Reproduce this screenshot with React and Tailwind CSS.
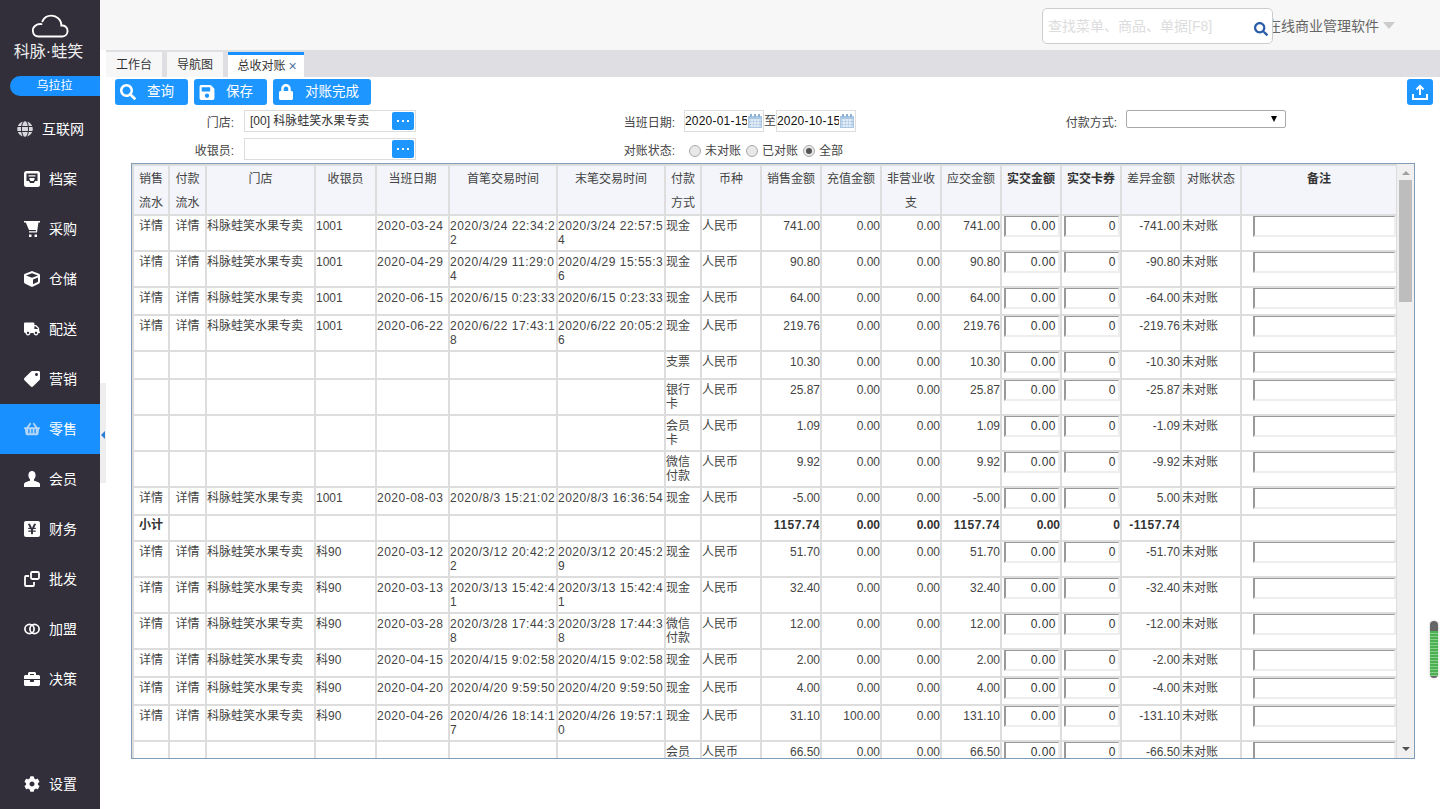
import {
  FaBriefcase,
  FaCog,
  FaCube,
  FaGlobe,
  FaLock,
  FaSave,
  FaSearch,
  FaShoppingBasket,
  FaTag,
  FaTruck,
  FaYenSign,
} from "react-icons/fa";

const ArchiveIcon = () => (
  <svg width="16" height="16" viewBox="0 0 16 16">
    <rect x="0" y="0" width="16" height="16" rx="2.500" fill="#fff" />
    <path d="M2.500 2.500h11v7.500h-2.500l-1 2h-4l-1-2h-2.500z" fill="#322f3b" />
    <path d="M4.500 4.300h7v1.200h-7zM5.500 7h5v1.500l-1 1.500h-3l-1-1.500z" fill="#fff" />
  </svg>
);

const CartIcon = () => (
  <svg width="16" height="16" viewBox="0 0 16 16" fill="#fff">
    <path d="M0 0h16v1.500h-1.600L13 11.500H5v-1.300h6.800l.2-1.200H5L1.800 1.500H0z" />
    <rect x="5" y="13.500" width="2.500" height="2.500" />
    <rect x="10.500" y="13.500" width="2.500" height="2.500" />
  </svg>
);

const UserIcon = () => (
  <svg width="16" height="16" viewBox="0 0 16 16" fill="#fff">
    <path d="M8 0c2.300 0 3.600 1.800 3.600 4.200 0 1.700-.7 3.200-1.600 4.100v1.500c2.300.8 6 1.600 6 3.200V16H0v-3c0-1.600 3.700-2.400 6-3.200V8.300C5.100 7.400 4.400 5.900 4.400 4.200 4.400 1.800 5.700 0 8 0z" />
  </svg>
);

const YenIcon = () => (
  <span className="w-4 h-4 rounded-[2px] bg-white flex items-center justify-center">
    <FaYenSign size={12} className="text-[#322f3b]" />
  </span>
);

const CloneIcon = () => (
  <svg width="16" height="16" viewBox="0 0 16 16" fill="none" stroke="#fff" strokeWidth="1.8">
    <rect x="7" y="1" width="8" height="7" rx="1.200" />
    <path d="M5 5H2a1 1 0 0 0-1 1v8a1 1 0 0 0 1 1h7a1 1 0 0 0 1-1v-3" />
  </svg>
);

const RingsIcon = () => (
  <svg width="16" height="16" viewBox="0 0 16 16" fill="none" stroke="#fff" strokeWidth="1.700">
    <circle cx="5.500" cy="8" r="4.600" />
    <circle cx="10.500" cy="8" r="4.600" />
  </svg>
);

const menu = [
  { label: "互联网", icon: <FaGlobe size={16} className="text-[#d8d8dc]" />, wide: true },
  { label: "档案", icon: <ArchiveIcon /> },
  { label: "采购", icon: <CartIcon /> },
  { label: "仓储", icon: <FaCube size={16} className="text-white" /> },
  { label: "配送", icon: <FaTruck size={16} className="text-white" /> },
  { label: "营销", icon: <FaTag size={16} className="text-white -scale-x-100" /> },
  { label: "零售", icon: <FaShoppingBasket size={16} className="text-[#b5d7f7]" />, active: true },
  { label: "会员", icon: <UserIcon /> },
  { label: "财务", icon: <YenIcon /> },
  { label: "批发", icon: <CloneIcon /> },
  { label: "加盟", icon: <RingsIcon /> },
  { label: "决策", icon: <FaBriefcase size={16} className="text-white" /> },
];

const MenuItem = ({ item }) => (
  <div
    className={`h-[50px] flex items-center text-[14px] text-white ${
      item.wide ? "pl-[17px] gap-[9px]" : "pl-6 gap-[9px]"
    } ${item.active ? "bg-[#1890ff]" : ""}`}
  >
    <span className="w-4 flex justify-center">{item.icon}</span>
    <span>{item.label}</span>
  </div>
);

const Sidebar = () => (
  <aside className="w-[100px] shrink-0 h-[809px] bg-[#322f3b] flex flex-col">
    <div className="h-[76px] flex flex-col items-center pt-[14px]">
      <svg width="38" height="25" viewBox="0 0 40 26" fill="none" stroke="#fff" strokeWidth="2" strokeLinecap="round">
        <path d="M11 10.500C6 10 1.500 13 2 18c.4 3.600 3 5.500 6 5.500h25c3.500 0 5.500-3 5.500-6 0-3.500-3-6-6.500-5.500C32 6 27 1.500 21.500 1.500 17 1.500 13.500 4 12 7.500" />
      </svg>
      <div className="text-[16px] leading-[20px] mt-[3px] -ml-[3px] text-[#eee] whitespace-nowrap">科脉·蛙笑</div>
    </div>
    <div className="ml-[10px] h-5 rounded-l-full bg-[#1890ff] text-white text-xs leading-5 text-center pr-[1px]">
      乌拉拉
    </div>
    <div className="h-2" />
    {menu.map((item) => (
      <MenuItem key={item.label} item={item} />
    ))}
    <div className="flex-1" />
    <div className="h-[50px] flex items-center pl-6 gap-[9px] text-[14px] text-white">
      <FaCog size={16} />
      <span>设置</span>
    </div>
  </aside>
);

const TopBar = () => (
  <div className="h-[50px] bg-[#f7f7f7] flex items-center justify-end pr-[45px]">
    <div className="relative z-10 w-[231px] h-9 mt-[2px] bg-white border border-[#ccc] rounded-[5px] flex items-center pl-[5px] text-[14px] text-[#ddd]">
      查找菜单、商品、单据[F8]
      <FaSearch size={14} className="absolute right-[4px] top-[13px] text-[#2a5caa]" />
    </div>
    <span className="-ml-[6px] mt-[2px] text-[14px] text-[#666] whitespace-nowrap">在线商业管理软件</span>
    <span className="ml-1 w-0 h-0 border-x-[6px] border-x-transparent border-t-[7px] border-t-[#ccc]" />
  </div>
);

const Tabs = () => (
  <div className="ml-[6px] h-[27px] bg-[#dfdee3] flex items-end gap-[5px] text-xs text-[#333]">
    <div className="w-[56px] h-[25px] bg-[#f7f7f7] flex items-center justify-center">工作台</div>
    <div className="w-[56px] h-[25px] bg-[#f7f7f7] flex items-center justify-center">导航图</div>
    <div className="w-[76px] h-[25px] bg-white border-t-[3px] border-[#1890ff] flex items-center justify-center gap-[3px] pl-[2px]">
      总收对账
      <span className="text-[#4f74a0] text-[14px] leading-none">×</span>
    </div>
  </div>
);

const ToolButton = ({ icon, label, className }) => (
  <button type="button" className={`h-[26px] rounded-[3px] bg-[#1e96ff] text-white text-[13.500px] flex items-center pl-[5px] ${className}`}>
    <span className="w-4 flex justify-center">{icon}</span>
    <span className="ml-[11px]">{label}</span>
  </button>
);

const Toolbar = () => (
  <div className="h-[33px] pt-[2px] pl-[15px] pr-[7px] flex gap-[6px]">
    <ToolButton icon={<FaSearch size={16} />} label="查询" className="w-[73px]" />
    <ToolButton icon={<FaSave size={17} />} label="保存" className="w-[73px]" />
    <ToolButton icon={<FaLock size={16} />} label="对账完成" className="w-[98px]" />
    <button type="button" className="ml-auto w-[26px] h-[26px] rounded-[3px] bg-[#1e96ff] flex items-center justify-center">
      <svg width="18" height="18" viewBox="0 0 18 18" fill="none" stroke="#fff" strokeWidth="2">
        <path d="M9 12V3M5.500 6.500 9 3l3.500 3.500M2 11v5h14v-5" />
      </svg>
    </button>
  </div>
);

const PickInput = ({ value }) => (
  <div className="w-[172px] h-[22px] border border-[#ddd] flex items-center justify-between pl-[5px] pr-[1px] text-xs text-[#333]">
    <span>{value}</span>
    <span className="w-[22px] h-[18px] rounded-[2px] bg-[#1e96ff] flex items-center justify-center gap-[3px]">
      <i className="w-[2px] h-[2px] bg-white" />
      <i className="w-[2px] h-[2px] bg-white" />
      <i className="w-[2px] h-[2px] bg-white" />
    </span>
  </div>
);

const CalendarIcon = () => (
  <svg width="16" height="16" viewBox="0 0 16 16" className="shrink-0">
    <path d="M1 3h14v12H1z" fill="#a9c6e3" />
    <path d="M3 1h2v3H3zM7 1h2v3H7zM11 1h2v3h-2z" fill="#8eb2d6" />
    <path d="M2 7h12M2 10h12M2 13h12M5 6v8M8 6v8M11 6v8" stroke="#fff" strokeWidth="0.800" />
  </svg>
);

const DateInput = ({ value }) => (
  <div className="w-[80px] h-[22px] border border-[#ddd] flex items-center text-xs text-[#111] tracking-[0.2px]">
    <span className="w-[63px] overflow-hidden whitespace-nowrap">{value}</span>
    <CalendarIcon />
  </div>
);

const Radio = ({ label, checked }) => (
  <span className="flex items-center gap-[4px]">
    <span className="w-[12px] h-[12px] rounded-full border border-[#aaa] bg-[#e8e8e8] flex items-center justify-center">
      {checked && <span className="w-[6px] h-[6px] rounded-full bg-[#555]" />}
    </span>
    {label}
  </span>
);

const Label = ({ text, className }) => (
  <span className={`text-right pt-[3px] ${className}`}>
    {text}
    <span className="pr-[3px]">:</span>
  </span>
);

const Filters = () => (
  <div className="text-xs text-[#444]">
    <div className="h-[28px] flex items-start">
      <div className="w-[316px] flex items-center">
        <Label text="门店" className="w-[137px]" />
        <span className="w-[7px]" />
        <PickInput value="[00] 科脉蛙笑水果专卖" />
      </div>
      <div className="w-[440px] flex items-center">
        <Label text="当班日期" className="w-[262px]" />
        <span className="w-[6px]" />
        <DateInput value="2020-01-15" />
        <span className="w-3 text-center">至</span>
        <DateInput value="2020-10-15" />
      </div>
      <div className="flex items-center h-[22px]">
        <Label text="付款方式" className="w-[264px]" />
        <span className="w-[6px]" />
        <div className="w-[160px] h-[18px] -mt-1 border border-[#aaa] rounded-[2px] bg-white flex items-center justify-end pr-2">
          <span className="w-0 h-0 border-x-[3.500px] border-x-transparent border-t-[6px] border-t-black" />
        </div>
      </div>
    </div>
    <div className="h-[25px] flex items-start">
      <div className="w-[316px] flex items-center">
        <Label text="收银员" className="w-[137px]" />
        <span className="w-[7px]" />
        <PickInput value="" />
      </div>
      <div className="flex items-center h-[22px] pt-[3px]">
        <Label text="对账状态" className="w-[262px] !pt-0" />
        <span className="w-[11px]" />
        <span className="flex gap-[5px]">
          <Radio label="未对账" />
          <Radio label="已对账" />
          <Radio label="全部" checked />
        </span>
      </div>
    </div>
  </div>
);

const widths = [36, 37, 109, 61, 73, 108, 108, 36, 60, 60, 60, 60, 60, 60, 60, 60, 60, 156];

const headers = [
  ["销售", "流水"],
  ["付款", "流水"],
  ["门店"],
  ["收银员"],
  ["当班日期"],
  ["首笔交易时间"],
  ["末笔交易时间"],
  ["付款", "方式"],
  ["币种"],
  ["销售金额"],
  ["充值金额"],
  ["非营业收", "支"],
  ["应交金额"],
  ["实交金额"],
  ["实交卡券"],
  ["差异金额"],
  ["对账状态"],
  ["备注"],
];

const boldHeaders = ["实交金额", "实交卡券", "备注"];

const row = (h, cashier, date, first, last, pay, sale, charge, due, diff) => ({
  h,
  cashier,
  date,
  first,
  last,
  pay,
  sale,
  charge,
  due,
  diff,
});

const rows = [
  row("h-[36px]", "1001", "2020-03-24", "2020/3/24 22:34:22", "2020/3/24 22:57:54", "现金", "741.00", "0.00", "741.00", "-741.00"),
  row("h-[36px]", "1001", "2020-04-29", "2020/4/29 11:29:04", "2020/4/29 15:55:36", "现金", "90.80", "0.00", "90.80", "-90.80"),
  row("h-[28px]", "1001", "2020-06-15", "2020/6/15 0:23:33", "2020/6/15 0:23:33", "现金", "64.00", "0.00", "64.00", "-64.00"),
  row("h-[36px]", "1001", "2020-06-22", "2020/6/22 17:43:18", "2020/6/22 20:05:26", "现金", "219.76", "0.00", "219.76", "-219.76"),
  row("h-[28px]", "", "", "", "", "支票", "10.30", "0.00", "10.30", "-10.30"),
  row("h-[36px]", "", "", "", "", "银行卡", "25.87", "0.00", "25.87", "-25.87"),
  row("h-[36px]", "", "", "", "", "会员卡", "1.09", "0.00", "1.09", "-1.09"),
  row("h-[36px]", "", "", "", "", "微信付款", "9.92", "0.00", "9.92", "-9.92"),
  row("h-[28px]", "1001", "2020-08-03", "2020/8/3 15:21:02", "2020/8/3 16:36:54", "现金", "-5.00", "0.00", "-5.00", "5.00"),
  { subtotal: true },
  row("h-[36px]", "科90", "2020-03-12", "2020/3/12 20:42:22", "2020/3/12 20:45:29", "现金", "51.70", "0.00", "51.70", "-51.70"),
  row("h-[36px]", "科90", "2020-03-13", "2020/3/13 15:42:41", "2020/3/13 15:42:41", "现金", "32.40", "0.00", "32.40", "-32.40"),
  row("h-[36px]", "科90", "2020-03-28", "2020/3/28 17:44:38", "2020/3/28 17:44:38", "微信付款", "12.00", "0.00", "12.00", "-12.00"),
  row("h-[28px]", "科90", "2020-04-15", "2020/4/15 9:02:58", "2020/4/15 9:02:58", "现金", "2.00", "0.00", "2.00", "-2.00"),
  row("h-[28px]", "科90", "2020-04-20", "2020/4/20 9:59:50", "2020/4/20 9:59:50", "现金", "4.00", "0.00", "4.00", "-4.00"),
  row("h-[36px]", "科90", "2020-04-26", "2020/4/26 18:14:17", "2020/4/26 19:57:10", "现金", "31.10", "100.00", "131.10", "-131.10"),
  row("h-[36px]", "", "", "", "", "会员卡", "66.50", "0.00", "66.50", "-66.50"),
];

const cell = "border-2 border-[#ddd] align-top px-0 pt-[3px] pb-0 leading-[14px]";
const inputCls =
  "h-[22px] -mt-[1px] border-2 border-t-[#999] border-l-[#999] border-r-[#eee] border-b-[#eee] bg-white text-right pr-[2px] text-xs text-[#333] tracking-[0.5px] outline-none";

const SubtotalRow = () => (
  <tr className="h-[26px] font-bold text-[#333]">
    <td className={`${cell} !pt-[2px] text-center`}>小计</td>
    {Array.from({ length: 8 }).map((_, i) => (
      <td key={i} className={cell} />
    ))}
    <td className={`${cell} !pt-[2px] text-right tracking-[0.5px]`}>1157.74</td>
    <td className={`${cell} !pt-[2px] text-right`}>0.00</td>
    <td className={`${cell} !pt-[2px] text-right`}>0.00</td>
    <td className={`${cell} !pt-[2px] text-right tracking-[0.5px]`}>1157.74</td>
    <td className={`${cell} !pt-[2px] text-right`}>0.00</td>
    <td className={`${cell} !pt-[2px] text-right`}>0</td>
    <td className={`${cell} !pt-[2px] text-right tracking-[0.5px]`}>-1157.74</td>
    <td className={cell} />
    <td className={cell} />
  </tr>
);

const DataRow = ({ r }) => (
  <tr className={r.h}>
    <td className={`${cell} text-center`}>{r.date && "详情"}</td>
    <td className={`${cell} text-center`}>{r.date && "详情"}</td>
    <td className={cell}>{r.date && "科脉蛙笑水果专卖"}</td>
    <td className={cell}>{r.cashier}</td>
    <td className={`${cell} tracking-[0.5px] whitespace-nowrap`}>{r.date}</td>
    <td className={`${cell} tracking-[0.5px] break-all`}>{r.first}</td>
    <td className={`${cell} tracking-[0.5px] break-all`}>{r.last}</td>
    <td className={`${cell} break-all`}>{r.pay}</td>
    <td className={cell}>人民币</td>
    <td className={`${cell} text-right`}>{r.sale}</td>
    <td className={`${cell} text-right`}>{r.charge}</td>
    <td className={`${cell} text-right`}>0.00</td>
    <td className={`${cell} text-right`}>{r.due}</td>
    <td className={`${cell} !pt-0 text-right`}>
      <input readOnly value="0.00" className={`${inputCls} w-[56px] ml-auto block`} />
    </td>
    <td className={`${cell} !pt-0 text-right`}>
      <input readOnly value="0" className={`${inputCls} w-[56px] ml-auto block`} />
    </td>
    <td className={`${cell} text-right`}>{r.diff}</td>
    <td className={cell}>未对账</td>
    <td className={`${cell} !pt-0 text-right`}>
      <input readOnly value="" className={`${inputCls} w-[143px] ml-auto block`} />
    </td>
  </tr>
);

const ReportTable = () => (
  <div className="ml-[31px] w-[1284px] h-[596px] border border-[#7f9db9] flex overflow-hidden">
    <div className="w-[1265px] overflow-hidden">
      <table className="table-fixed border-collapse w-[1264px] text-xs text-[#444]">
        <colgroup>
          {widths.map((w, i) => (
            <col key={i} style={{ width: w }} />
          ))}
        </colgroup>
        <thead>
          <tr className="bg-[#f3f5fa]">
            {headers.map((lines) => (
              <th
                key={lines[0]}
                className={`border-2 border-[#ddd] align-top text-center p-0 leading-[24px] ${
                  boldHeaders.includes(lines[0]) ? "font-bold text-[#333]" : "font-normal"
                }`}
              >
                <div className="h-[48px] overflow-hidden pt-[1px]">
                  {lines.map((t) => (
                    <div key={t}>{t}</div>
                  ))}
                </div>
              </th>
            ))}
          </tr>
        </thead>
        <tbody>
          {rows.map((r, i) => (r.subtotal ? <SubtotalRow key={i} /> : <DataRow key={i} r={r} />))}
        </tbody>
      </table>
    </div>
    <div className="w-[17px] shrink-0 bg-[#f0f0f0] flex flex-col items-center relative">
      <span className="mt-[7px] w-0 h-0 border-x-[4px] border-x-transparent border-b-[4px] border-b-[#a0a0a0]" />
      <span className="mt-[5px] w-[13px] h-[122px] bg-[#bdbdbd]" />
      <span className="mt-auto mb-[7px] w-0 h-0 border-x-[4px] border-x-transparent border-t-[4px] border-t-[#505050]" />
    </div>
  </div>
);

const App = () => (
  <div className="relative w-[1440px] h-[809px] overflow-hidden bg-white flex font-['Liberation_Sans','Noto_Sans_CJK_SC',sans-serif]">
    <Sidebar />
    <main className="flex-1 min-w-0 relative">
      <TopBar />
      <Tabs />
      <Toolbar />
      <Filters />
      <ReportTable />
      {/* collapse handle */}
      <div className="absolute left-0 top-[383px] w-[6px] h-[100px] bg-[#eee] flex items-center">
        <span className="w-0 h-0 border-y-[4px] border-y-transparent border-r-[4px] border-r-[#2a7fd4] ml-[1px] mt-[4px]" />
      </div>
    </main>
    {/* floating page scrollbar */}
    <div className="absolute left-[1430px] top-[621px] w-2 h-[57px] rounded-full bg-[#666] shadow-[0_0_3px_rgba(0,0,0,0.2)] overflow-hidden pt-[10px]">
      <div className="h-[45px] bg-[repeating-linear-gradient(#4caf50_0px,#4caf50_2px,#86cf8c_2px,#86cf8c_3px)]" />
    </div>
  </div>
);

export default App;
